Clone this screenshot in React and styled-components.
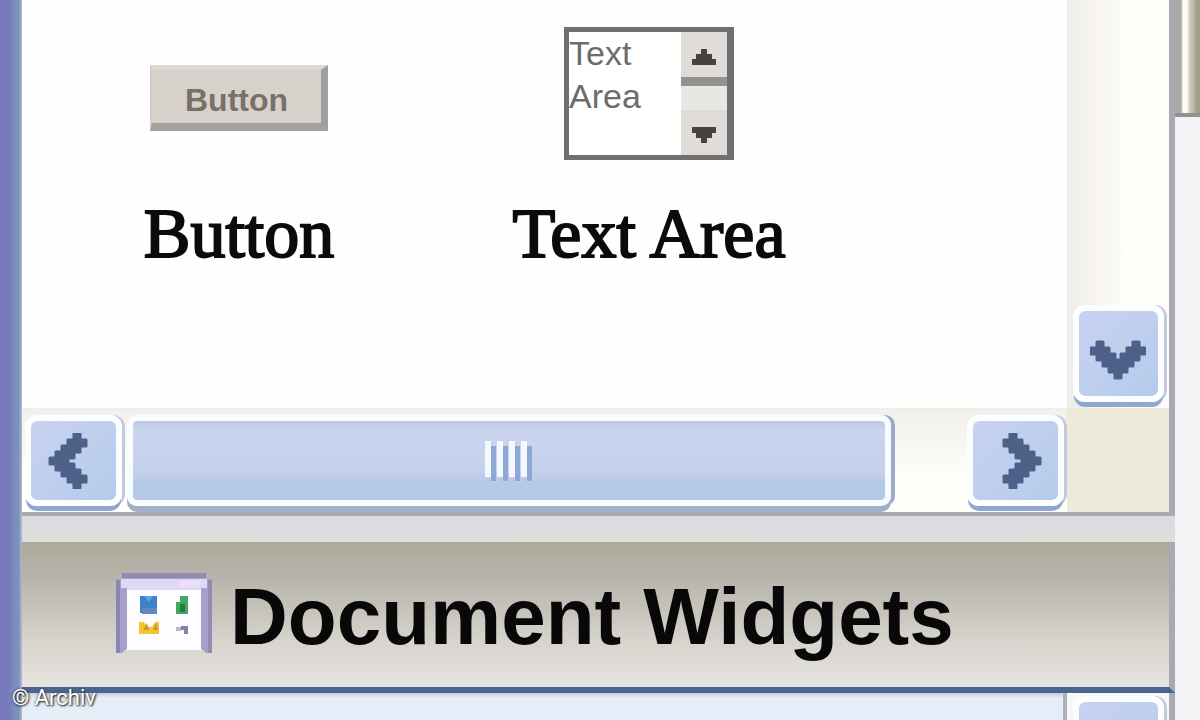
import React from "react";
import styled, { createGlobalStyle } from "styled-components";

const turns = { down: 0, left: 90, right: 270 };

function Chevron({ direction }) {
  return (
    <svg width="56" height="56" viewBox="0 0 56 56" aria-hidden="true">
      <g transform={`rotate(${turns[direction]} 28 28)`}>
        <path
          d="M7 16h6v6h6v6h6v6h6v-6h6v-6h6v-6h6v6h6v6h-6v6h-6v6h-6v6h-6v6h-6v-6h-6v-6h-6v-6H7v-6H1v-6h6z"
          fill="#4d6088"
          stroke="#4d6088"
          strokeWidth="3"
          strokeLinejoin="round"
        />
      </g>
    </svg>
  );
}

function Grip() {
  return (
    <svg width="50" height="42" viewBox="0 0 50 42" aria-hidden="true">
      {[0, 12, 24, 36].map(x => (
        <g key={x}>
          <rect x={x + 7} y="6" width="5" height="35" fill="#8ea7d3" />
          <rect x={x + 1} y="1" width="6" height="36" fill="#f3f9ff" />
        </g>
      ))}
    </svg>
  );
}

function WidgetsIcon() {
  return (
    <svg width="96" height="80" viewBox="0 0 96 80" aria-hidden="true">
      <path d="M6 0h84v6h6v74h-6l-4-4H10l-4 4H0V6h6z" fill="#a79fcb" />
      <rect x="6" y="0" width="84" height="5" fill="#918bb4" />
      <rect x="0" y="7" width="4" height="73" fill="#8d84b3" />
      <rect x="92" y="7" width="4" height="73" fill="#928bb2" />
      <path d="M5 6h86v9h-6v8H11v-8H5z" fill="#dcd9f5" />
      <rect x="62" y="8" width="22" height="6" fill="#f0dcf8" />
      <path d="M11 17h74v60H11z" fill="#fdfdff" />
      <rect x="24" y="23" width="17" height="17" fill="#3f82c6" />
      <path d="M28 23h9l-4 6z" fill="#5aa7e8" />
      <rect x="26" y="35" width="15" height="6" fill="#6388bb" />
      <path d="M60 41V29h4v-6h8v18z" fill="#45a565" />
      <path d="M64 39v-8h5v8z" fill="#267b43" />
      <path d="M23 61V49h5l3 5h5l3-5h4v12z" fill="#f4c52d" />
      <path d="M27 57l4-7 2 7zM37 57l3-7 2 7z" fill="#cf942b" />
      <rect x="60" y="54" width="5" height="4" fill="#b9bac9" />
      <path d="M65 53h7v8h-4v-4h-3z" fill="#7f819f" />
    </svg>
  );
}

export default function App() {
  return (
    <Page>
      <GlobalStyle />
      <WindowEdge />
      <Main>
        <Palette>
          <Widgets>
            <Widget>
              <Preview>
                <SampleButton type="button">Button</SampleButton>
              </Preview>
              <Caption>Button</Caption>
            </Widget>
            <Widget>
              <Preview>
                <SampleArea>
                  <SampleText
                    aria-label="Text Area"
                    readOnly
                    defaultValue={"Text\nArea"}
                  />
                  <SampleScroll>
                    <SampleArrow type="button" aria-label="Up">
                      <svg width="28" height="18" viewBox="0 0 28 18">
                        <path d="M11 1h6v5h5v5h4v6H2v-6h4V6h5z" fill="#46433f" />
                      </svg>
                    </SampleArrow>
                    <SampleDivider />
                    <SampleArrow type="button" aria-label="Down">
                      <svg width="28" height="18" viewBox="0 0 28 18">
                        <path d="M2 1h24v6h-4v5h-5v5h-6v-5H6V7H2z" fill="#46433f" />
                      </svg>
                    </SampleArrow>
                  </SampleScroll>
                </SampleArea>
              </Preview>
              <Caption>Text Area</Caption>
            </Widget>
          </Widgets>
          <VerticalBar>
            <ScrollButton type="button" aria-label="Scroll down">
              <Chevron direction="down" />
            </ScrollButton>
          </VerticalBar>
          <HorizontalBar>
            <ScrollButton type="button" aria-label="Scroll left">
              <Chevron direction="left" />
            </ScrollButton>
            <Track>
              <Thumb type="button" aria-label="Scroll position">
                <Grip />
              </Thumb>
            </Track>
            <ScrollButton type="button" aria-label="Scroll right">
              <Chevron direction="right" />
            </ScrollButton>
          </HorizontalBar>
          <Corner />
        </Palette>
        <Gap />
        <Header>
          <WidgetsIcon />
          <Title>Document Widgets</Title>
        </Header>
        <NextPane>
          <NextContent />
          <NextBar>
            <ScrollButton type="button" aria-label="Scroll up" />
          </NextBar>
        </NextPane>
      </Main>
      <Outside>
        <OutsideEdge />
      </Outside>
      <Credit>© Archiv</Credit>
    </Page>
  );
}

const GlobalStyle = createGlobalStyle`
  * {
    box-sizing: border-box;
  }

  body {
    margin: 0;
    background: #f3f3f5;
  }
`;

const Page = styled.div`
  position: relative;
  display: flex;
  height: 100vh;
  overflow: hidden;
  font-family: "Liberation Sans", Arial, sans-serif;
`;

const WindowEdge = styled.div`
  flex: 0 0 22px;
  background: linear-gradient(90deg, #7777b9 0, #7679ba 8px, #7b8cbd 14px, #7e93bd 19px, #b4bfce 22px);
`;

const Main = styled.main`
  flex: 1;
  min-width: 0;
  display: flex;
  flex-direction: column;
`;

const Palette = styled.section`
  display: grid;
  grid-template-columns: 1fr 102px;
  grid-template-rows: auto 104px;
  background: #fefefe;
  border-right: 6px solid #a9a9b2;
  border-bottom: 4px solid #a9aab0;
`;

const Widgets = styled.div`
  display: flex;
  padding: 27px 12px 132px;
`;

const Widget = styled.figure`
  flex: 0 0 410px;
  margin: 0;
  display: flex;
  flex-direction: column;
  align-items: center;
`;

const Preview = styled.div`
  height: 133px;
  display: flex;
  align-items: center;
`;

const SampleButton = styled.button`
  width: 178px;
  height: 66px;
  margin-top: 8px;
  padding: 8px 0 0;
  border: solid;
  border-width: 5px 7px 8px 2px;
  border-color: #dddad4 #a09f9b #a3a29d #d0cdc8;
  background: #d7d1cb;
  color: #777168;
  font-family: inherit;
  font-size: 32px;
  font-weight: bold;
  line-height: 40px;
`;

const SampleArea = styled.div`
  display: flex;
  width: 170px;
  height: 133px;
  border: 5px solid #707070;
  border-right-width: 7px;
  background: #fff;
`;

const SampleText = styled.textarea`
  flex: 1;
  min-width: 0;
  padding: 0;
  border: 0;
  resize: none;
  overflow: hidden;
  background: transparent;
  color: #6c6c6c;
  font-family: inherit;
  font-size: 34px;
  line-height: 43px;
`;

const SampleScroll = styled.div`
  flex: 0 0 46px;
  display: flex;
  flex-direction: column;
  justify-content: space-between;
  background: #e9e7e3;
`;

const SampleArrow = styled.button`
  height: 45px;
  padding: 4px 0 0;
  border: 0;
  background: #dfdcd7;
  display: flex;
  align-items: center;
  justify-content: center;
`;

const SampleDivider = styled.div`
  height: 9px;
  margin-bottom: auto;
  background: #94928e;
`;

const Caption = styled.figcaption`
  margin-top: 32px;
  color: #0b0b0b;
  font-family: "Liberation Serif", "Times New Roman", serif;
  font-size: 70px;
  line-height: 84px;
  white-space: nowrap;
  -webkit-text-stroke: 2px #0b0b0b;
`;

const ScrollButton = styled.button`
  flex: none;
  width: 97px;
  height: 91px;
  padding: 0;
  display: flex;
  align-items: center;
  justify-content: center;
  border: 6px solid #fcfeff;
  border-radius: 12px;
  background: linear-gradient(135deg, #c8d1f0, #bfcfee 50%, #b5cbeb) padding-box;
  box-shadow: 0 6px 0 -1px #8fa8d2, 3px 0 0 #c3c9da;
`;

const VerticalBar = styled.div`
  display: flex;
  flex-direction: column;
  justify-content: flex-end;
  align-items: center;
  padding-bottom: 6px;
  background: linear-gradient(90deg, #edede8, #f7f4f1 30%, #fefefa 60%, #fdfefb);

  ${ScrollButton} {
    width: 91px;
    height: 97px;
  }
`;

const HorizontalBar = styled.div`
  display: flex;
  padding: 5px 3px 0 3px;
  border-top: 2px solid #f0efe6;
  background: linear-gradient(#f2f0ec, #fefefa 70%);
`;

const Track = styled.div`
  flex: 1;
  padding-left: 5px;
`;

const Thumb = styled.button`
  width: 91%;
  height: 91px;
  padding: 0;
  display: flex;
  align-items: center;
  justify-content: center;
  border: 6px solid #f8fdff;
  border-radius: 10px;
  background: linear-gradient(#bdc9e4, #cad4ed 12%, #c6d1ec 60%, #b5c8e8 80%, #b6c8e6) padding-box;
  box-shadow: 4px 0 0 #9ca9cd, 0 6px 0 #a4aec8;
`;

const Corner = styled.div`
  background: #eeead9;
`;

const Gap = styled.div`
  flex: 0 0 26px;
  background: linear-gradient(#d9dbde, #dddddb);
`;

const Header = styled.header`
  flex: none;
  display: flex;
  align-items: center;
  gap: 18px;
  height: 151px;
  padding: 0 0 4px 94px;
  border-right: 6px solid #a9a9b2;
  border-bottom: 6px solid #4c6590;
  background: linear-gradient(#aca899, #b4b2a8 20%, #c6c2ba 45%, #d7d5ce 70%, #e7e4df);
`;

const Title = styled.h2`
  margin: 0;
  padding-top: 8px;
  color: #080808;
  font-size: 80px;
  font-weight: bold;
  line-height: 96px;
  white-space: nowrap;
`;

const NextPane = styled.section`
  flex: 1;
  min-height: 0;
  display: flex;
  overflow: hidden;
  border-right: 6px solid #a9a9b2;
`;

const NextContent = styled.div`
  flex: 1;
  background: linear-gradient(#c3cde1, #e9eef3 5px, #e3eef9 14px);
`;

const NextBar = styled.div`
  flex: 0 0 106px;
  display: flex;
  justify-content: center;
  padding-top: 3px;
  border-left: 4px solid #b0b0ba;
  background: #f7f8f8;

  ${ScrollButton} {
    width: 91px;
  }
`;

const Outside = styled.aside`
  flex: 0 0 25px;
  background: #f3f3f5;
`;

const OutsideEdge = styled.div`
  height: 117px;
  border-bottom: 4px solid #96938e;
  background: linear-gradient(90deg, #a9a9a8 6px, #fcfcf6 8px, #fcfcf6 12px, #cbc7b7 15px, #c2bda9 18px, #a49f8b 21px);
`;

const Credit = styled.small`
  position: absolute;
  left: 12px;
  bottom: 8px;
  color: #fff;
  font-family: Roboto, sans-serif;
  font-size: 22px;
  line-height: 28px;
  text-shadow: 1px 1px 2px #222, 0 0 3px #444;
`;
